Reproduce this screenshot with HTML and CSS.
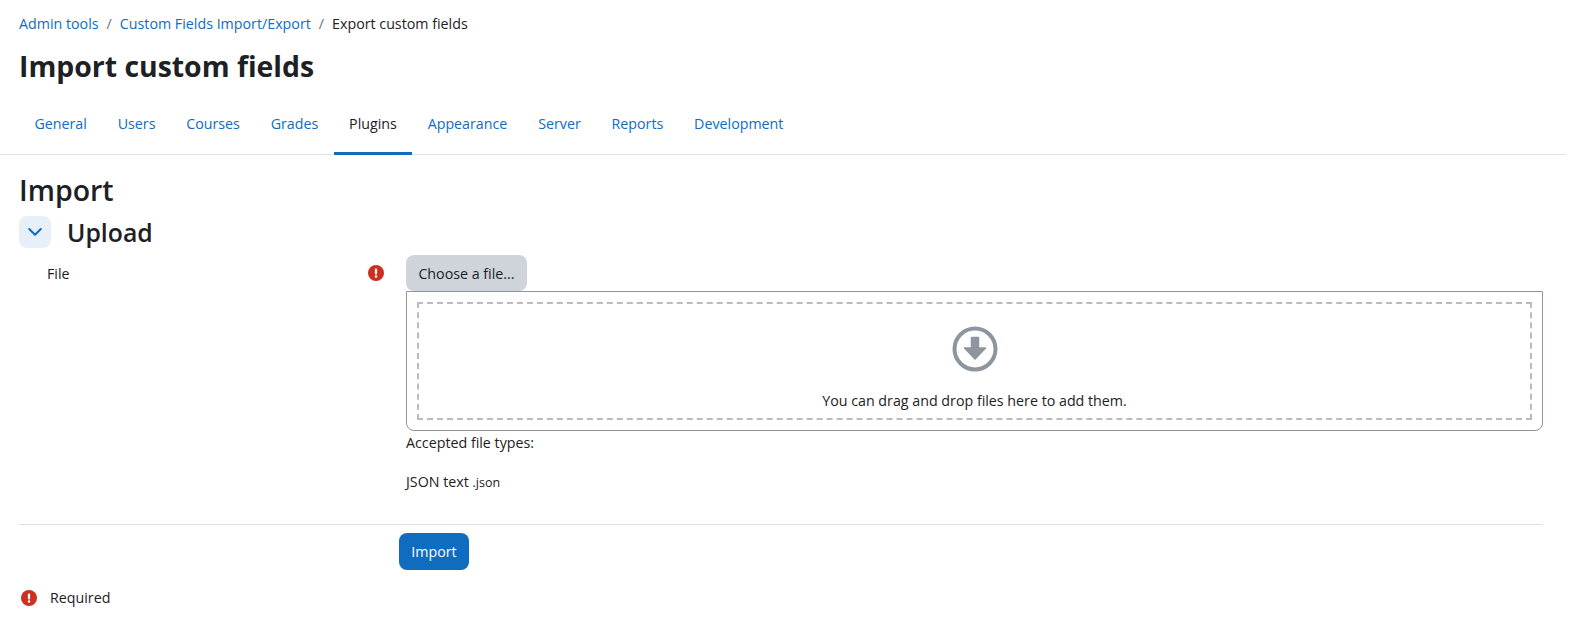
FILE: index.html
```html
<!DOCTYPE html>
<html lang="en">
<head>
  <meta charset="UTF-8">
  <meta name="viewport" content="width=device-width, initial-scale=1.0">
  <title>Import custom fields</title>
  <link rel="stylesheet" href="styles.css">
</head>
<body>
  <header class="page-header">
    <ol class="breadcrumb">
      <li><a href="#">Admin tools</a></li>
      <li class="sep">/</li>
      <li><a href="#">Custom Fields Import/Export</a></li>
      <li class="sep">/</li>
      <li>Export custom fields</li>
    </ol>
    <h1>Import custom fields</h1>
  </header>

  <nav class="tabs">
    <a href="#">General</a>
    <a href="#">Users</a>
    <a href="#">Courses</a>
    <a href="#">Grades</a>
    <a href="#" class="active">Plugins</a>
    <a href="#">Appearance</a>
    <a href="#">Server</a>
    <a href="#">Reports</a>
    <a href="#">Development</a>
  </nav>

  <main class="content">
    <h2>Import</h2>
    <div class="section-head">
      <button class="toggle" type="button" aria-label="Collapse">
        <svg width="14" height="14" viewBox="0 0 14 14"><path d="M1.2 4 L7 9.8 L12.8 4" fill="none" stroke="#0f6cbf" stroke-width="2" stroke-linecap="round" stroke-linejoin="round"/></svg>
      </button>
      <h3>Upload</h3>
    </div>

    <div class="form-row">
      <div class="label-col">
        <label>File</label>
        <svg class="req-icon" width="16" height="16" viewBox="0 0 16 16"><circle cx="8" cy="8" r="8" fill="#ca3120"/><rect x="6.9" y="3.4" width="2.2" height="6" rx="1" fill="#fff"/><circle cx="8" cy="11.5" r="1.25" fill="#fff"/></svg>
      </div>
      <div class="field-col">
        <button class="btn-secondary" type="button">Choose a file...</button>
        <div class="filepicker">
          <div class="dropzone">
            <svg class="drop-icon" width="46" height="46" viewBox="0 0 46 46">
              <circle cx="23" cy="23" r="20.5" fill="none" stroke="#8f959e" stroke-width="4"/>
              <path d="M19.5 11.5 H26.5 V22 H33.5 L23 33 L12.5 22 H19.5 Z" fill="#8f959e" stroke="#8f959e" stroke-width="1.5" stroke-linejoin="round"/>
            </svg>
            <p>You can drag and drop files here to add them.</p>
          </div>
        </div>
        <p class="accepted">Accepted file types:</p>
        <p class="types">JSON text <small>.json</small></p>
      </div>
    </div>

    <hr>

    <div class="actions">
      <button class="btn-primary" type="button">Import</button>
    </div>

    <div class="required-note">
      <svg width="16" height="16" viewBox="0 0 16 16"><circle cx="8" cy="8" r="8" fill="#ca3120"/><rect x="6.9" y="3.4" width="2.2" height="6" rx="1" fill="#fff"/><circle cx="8" cy="11.5" r="1.25" fill="#fff"/></svg>
      <span>Required</span>
    </div>
  </main>
</body>
</html>
```

FILE: styles.css
```css
body {
  margin: 0;
  background: #fff;
  color: #1d2125;
  font-family: "Open Sans", "Noto Sans", sans-serif;
  font-size: 14.25px;
  line-height: 22px;
}
a {
  color: #0f6cbf;
  text-decoration: none;
}
p {
  margin: 0;
}
button {
  font-family: inherit;
  font-size: 14.25px;
  border: none;
  cursor: pointer;
}

.page-header {
  padding: 13px 0 0 19px;
}
.breadcrumb {
  display: flex;
  gap: 8px;
  list-style: none;
  margin: 0;
  padding: 0;
}
.breadcrumb .sep {
  color: #6a737b;
}
h1 {
  margin: 11px 0 0;
  font-size: 28.4px;
  line-height: 40px;
  font-weight: 700;
}

.tabs {
  display: flex;
  width: 1566px;
  height: 61px;
  margin-top: 8px;
  box-sizing: border-box;
  padding-left: 19px;
  border-bottom: 1px solid #dee2e6;
}
.tabs a {
  display: flex;
  align-items: center;
  height: 61px;
  box-sizing: border-box;
  padding: 2px 15.4px 0;
  border-bottom: 3px solid transparent;
}
.tabs a.active {
  color: #1d2125;
  border-bottom-color: #0f6cbf;
}

.content {
  width: 1524px;
  margin-left: 19px;
}
h2 {
  margin: 16px 0 0;
  font-size: 28.5px;
  line-height: 38px;
  font-weight: 600;
}
.section-head {
  display: flex;
  align-items: center;
  gap: 16px;
  margin-top: 6px;
}
.toggle {
  display: flex;
  align-items: center;
  justify-content: center;
  width: 32px;
  height: 32px;
  padding: 0;
  background: #e7f0f9;
  border-radius: 8px;
}
h3 {
  margin: 0;
  font-size: 24.8px;
  line-height: 34px;
  font-weight: 600;
}

.form-row {
  display: flex;
  margin-top: 6px;
}
.label-col {
  display: flex;
  align-items: flex-start;
  justify-content: space-between;
  width: 337px;
  height: 36px;
  margin-right: 22px;
  padding-left: 28px;
}
.label-col label {
  line-height: 38px;
}
.req-icon {
  margin-top: 10px;
}
.field-col {
  flex: 1;
}
.btn-secondary {
  display: block;
  width: 121px;
  height: 36px;
  padding: 0;
  background: #ced4da;
  color: #1d2125;
  border-radius: 8px;
}
.filepicker {
  box-sizing: border-box;
  height: 140px;
  padding: 10px;
  border: 1px solid #8f959e;
  border-radius: 0 0 8px 8px;
}
.dropzone {
  box-sizing: border-box;
  height: 118px;
  padding-top: 22px;
  border: 2px dashed #bbb;
  text-align: center;
}
.drop-icon {
  display: block;
  margin: 0 auto;
}
.dropzone p {
  margin-top: 18px;
}
.accepted {
  margin-top: 1px;
}
.types {
  margin-top: 17px;
}
.types small {
  font-size: 12.5px;
}

hr {
  margin: 30px 0 0;
  border: none;
  border-top: 1px solid #dee2e6;
}
.actions {
  margin: 8px 0 0 380px;
}
.btn-primary {
  display: block;
  width: 70px;
  height: 37px;
  padding: 0;
  background: #0f6cbf;
  color: #fff;
  border-radius: 8px;
}
.required-note {
  display: flex;
  align-items: center;
  gap: 13px;
  margin: 17px 0 0 2px;
}
```
